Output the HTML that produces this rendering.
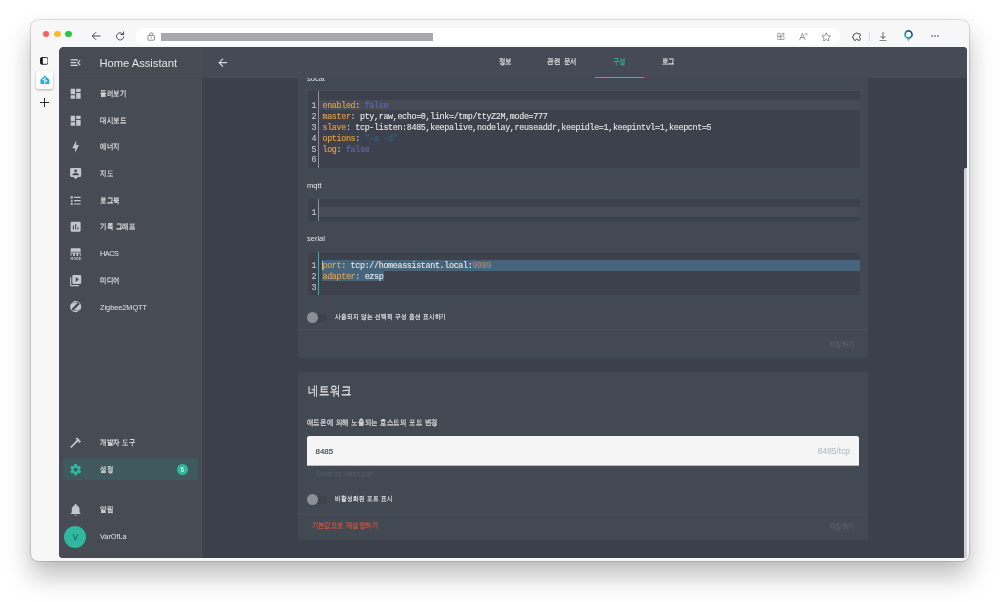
<!DOCTYPE html>
<html lang="ko">
<head>
<meta charset="utf-8">
<title>Zigbee2MQTT - Home Assistant</title>
<style>
*{box-sizing:border-box;margin:0;padding:0}
html,body{width:1000px;height:602px;overflow:hidden;background:#fff;font-family:"Liberation Sans",sans-serif}
.abs{position:absolute}
svg{display:block}
/* ---------- macOS window ---------- */
#win{will-change:transform;position:absolute;left:31px;top:20px;width:938px;height:541px;border-radius:7px;background:#f7f7f8;
 box-shadow:0 0 0 .6px rgba(0,0,0,.22),0 15px 26px rgba(0,0,0,.255),0 2px 8px rgba(0,0,0,.06)}
.tl{position:absolute;top:10.6px;width:6.7px;height:6.7px;border-radius:50%}
#url{position:absolute;left:105px;top:8px;width:704px;height:16.5px;border-radius:9px;background:#fff}
#redact{position:absolute;left:130px;top:12.5px;width:272px;height:8.5px;background:#a9a9a9}
.tb{position:absolute}
/* left vertical tab strip */
#tabsel{position:absolute;left:5px;top:51px;width:17px;height:18px;border-radius:2.5px;background:#fff;box-shadow:0 1px 2.5px rgba(0,0,0,.3)}
/* ---------- page (dark) ---------- */
#page{position:absolute;left:28px;top:27px;width:907.5px;height:511px;border-radius:5px 4px 4px 4px;background:#3c404a;overflow:hidden;color:#e1e1e1}
#side{position:absolute;left:0;top:0;width:143px;height:511px;background:#464b54;border-right:1px solid #484d56}
#sidein{position:absolute;left:1px;top:0;width:142px;height:511px}
#sidehead{position:absolute;left:0;top:0;width:142px;height:31px;border-bottom:1px solid #43474f}
#title{position:absolute;left:39.4px;top:8.5px;font-size:11.2px;line-height:14px;color:#e4e5e7;white-space:nowrap}
.it{position:absolute;left:0;width:142px;height:26.67px}
.it svg{position:absolute;left:8.8px;top:6.7px;width:13.3px;height:13.3px;fill:#c3c6cc}
.it .lb{position:absolute;left:40px;top:7.9px;font-size:7.8px;line-height:12px;color:#e4e5e7;white-space:nowrap}
.ko{display:inline-block;white-space:nowrap;font-size:1.03em;-webkit-text-stroke:.2px}
.ko i{display:inline-flex;justify-content:center;width:var(--cw);font-style:normal;white-space:pre;transform:scaleX(.8)}
#selbg{position:absolute;left:2.5px;top:411.4px;width:135.5px;height:21.4px;border-radius:2px;background:#40595c}
#badge{position:absolute;left:116.7px;top:417px;width:11px;height:11px;border-radius:50%;background:#2fb89f;color:#fff;font-size:6.4px;line-height:11px;text-align:center}
#avatar{position:absolute;left:4.2px;top:478.7px;width:22.2px;height:22.2px;border-radius:50%;background:#2fb89f;color:#17524a;font-size:8.7px;line-height:22.2px;text-align:center}
/* main */
#main{position:absolute;left:143px;top:0;width:764.5px;height:511px}
#mhead{position:absolute;left:0;top:0;width:764.5px;height:31px;background:#464a54;z-index:5}
.tab{position:absolute;top:0;height:31px;font-size:7.8px;line-height:29.2px;text-align:center;color:#e4e5e7;white-space:nowrap}
#uline{position:absolute;left:392.5px;top:29.6px;width:49.5px;height:1.2px;background:#2fb89f}
.card{position:absolute;left:96px;width:570px;background:#434953;border-radius:2.5px}
.lab{position:absolute;left:9px;font-size:7.5px;line-height:10px;color:#e1e2e5;white-space:nowrap}
.ed{position:absolute;left:10.3px;width:551.5px;background:#3c414b;box-shadow:0 -1px 0 #474c56;font-family:"Liberation Mono",monospace;font-size:8.4px;letter-spacing:-.342px;line-height:11px;color:#e8e8e8;overflow:hidden;-webkit-text-stroke:.1px}
.ed .gl{position:absolute;left:10px;top:0;bottom:0;width:1px;background:#8d9097}
.ed .ln{position:absolute;left:0;width:8px;height:11px;text-align:right;color:#c4c7cd}
.ed .tx{position:absolute;left:14.2px;height:11px;white-space:pre}
.ed .act{position:absolute;left:11px;right:0;height:10px;background:#464b55}
.ed .sel{position:absolute;left:13.8px;height:10px;background:#46657d}
.k{color:#e6a545}.a{color:#6565c9}.s{color:#2e6988}.n{color:#b88c68}.p{color:#c9ccd2}
.sw{position:absolute;left:8.6px;width:21px;height:11.2px}
.sw i{position:absolute;left:3px;top:1.6px;width:17px;height:8px;border-radius:4px;background:#3e424b}
.sw b{position:absolute;left:0;top:0;width:11.2px;height:11.2px;border-radius:50%;background:#8b8f97}
.swl{position:absolute;left:37px;font-size:7.2px;line-height:10px;color:#e1e2e5;white-space:nowrap}
.hr{position:absolute;left:0;width:570px;height:1px;background:#474c56}
.save{position:absolute;left:530.6px;font-size:7.7px;line-height:10px;color:#5c616b;white-space:nowrap}
#thumb{position:absolute;left:905px;top:121.4px;width:3px;height:390px;background:#cfd0d4;border-radius:1.5px 0 0 0}
.h2{font-size:12.6px;line-height:16px;color:#e4e5e7;white-space:nowrap}
.desc{font-size:7.8px;line-height:10px;color:#e1e2e5;white-space:nowrap}
.inp{width:552.7px;height:30.6px;background:#f5f5f5;border-radius:2.2px 2.2px 0 0;border-bottom:.5px solid #b9babd}
.help{font-size:6.5px;line-height:9px;color:#595e68;white-space:nowrap}
.reset{font-size:7.6px;line-height:10px;color:#d9513f;white-space:nowrap}
.lat{font-size:7.3px!important;margin-top:.4px}
</style>
</head>
<body>
<div id="win">
  <!-- traffic lights -->
  <div class="tl" style="left:11.7px;background:#fe5f57"></div>
  <div class="tl" style="left:22.9px;background:#febc2e"></div>
  <div class="tl" style="left:34.1px;background:#28c840"></div>
  <!-- back -->
  <svg class="tb" style="left:59.5px;top:10.5px" width="10" height="10" viewBox="0 0 20 20"><path d="M18 10H3M9.5 3L2.5 10l7 7" fill="none" stroke="#2b2b2b" stroke-width="1.7" stroke-linecap="round" stroke-linejoin="round"/></svg>
  <!-- reload -->
  <svg class="tb" style="left:84.3px;top:11px" width="10.4" height="10.4" viewBox="0 0 20 20"><path d="M15.7 6.3A7 7 0 1 0 16.9 11.5" fill="none" stroke="#2b2b2b" stroke-width="1.6" stroke-linecap="round"/><path d="M16.6 1.8V6.9H11.5" fill="none" stroke="#2b2b2b" stroke-width="1.6" stroke-linecap="round" stroke-linejoin="round"/></svg>
  <div id="url"></div>
  <!-- lock -->
  <svg class="tb" style="left:115.5px;top:11.5px" width="8.5" height="9" viewBox="0 0 17 18"><rect x="2" y="7" width="13" height="9.5" rx="1.8" fill="none" stroke="#6b6b6b" stroke-width="1.5"/><path d="M5 7V5a3.5 3.5 0 0 1 7 0v2" fill="none" stroke="#6b6b6b" stroke-width="1.5"/><circle cx="8.5" cy="11.7" r="1.2" fill="#6b6b6b"/></svg>
  <div id="redact"></div>
  <!-- right toolbar icons -->
  <div id="tbicons">
    <!-- collections / app grid -->
    <svg class="tb" style="left:745.5px;top:12px" width="9" height="8.5" viewBox="0 0 18 17"><path d="M1.5 2.5h6v6h-6zM1.5 8.5h6v6.5h-6zM7.5 8.5h6.5v6.5h-6.5z" fill="none" stroke="#8b8b8b" stroke-width="1.4"/><path d="M12.5 1v6M9.5 4h6" stroke="#8b8b8b" stroke-width="1.4"/></svg>
    <!-- read aloud -->
    <svg class="tb" style="left:768px;top:12px" width="10" height="8.5" viewBox="0 0 20 17"><path d="M1.5 15.5L6.8 2.5l5.3 13M3.4 11h6.8" fill="none" stroke="#7d7d7d" stroke-width="1.5" stroke-linejoin="round" stroke-linecap="round"/><path d="M13.5 2.2a3 3 0 0 1 3.3 3.3M13.2 4.8a1 1 0 0 1 1.2 1.2" fill="none" stroke="#7d7d7d" stroke-width="1.2" stroke-linecap="round"/></svg>
    <!-- favourite star -->
    <svg class="tb" style="left:790px;top:11.5px" width="10.5" height="9.5" viewBox="0 0 21 19"><path d="M10.5 1.5l2.7 5.7 6.1.8-4.5 4.2 1.2 6-5.5-3-5.5 3 1.2-6L1.7 8l6.1-.8z" fill="none" stroke="#747474" stroke-width="1.5" stroke-linejoin="round"/></svg>
    <!-- extensions -->
    <svg class="tb" style="left:819.5px;top:11.5px" width="10.5" height="9.5" viewBox="0 0 21 19"><path d="M7 3.5h2.3a2.3 2.3 0 0 1 4.4 0H17a1.5 1.5 0 0 1 1.5 1.5v2.6a2.4 2.4 0 0 0 0 4.6V15a1.5 1.5 0 0 1-1.5 1.5h-3a2.2 2.2 0 0 0-4.4 0H7A1.5 1.5 0 0 1 5.5 15v-2.5a2.4 2.4 0 0 1 0-4.8V5A1.5 1.5 0 0 1 7 3.5z" fill="none" stroke="#2e2e2e" stroke-width="1.7" stroke-linejoin="round"/></svg>
    <div class="tb" style="left:838px;top:12px;width:1px;height:8.5px;background:#dadada"></div>
    <!-- downloads -->
    <svg class="tb" style="left:848px;top:11.5px" width="8" height="9.5" viewBox="0 0 16 19"><path d="M8 1v11.5M3.5 8.5L8 13l4.5-4.5M2 17.5h12" fill="none" stroke="#2e2e2e" stroke-width="1.5" stroke-linecap="round" stroke-linejoin="round"/></svg>
    <!-- pin -->
    <svg class="tb" style="left:873px;top:10px" width="9" height="11.5" viewBox="0 0 18 23"><defs><linearGradient id="pg" x1="1" y1="0" x2="0" y2="1"><stop offset="0" stop-color="#0d5068"/><stop offset=".55" stop-color="#1b7894"/><stop offset="1" stop-color="#58b4cc"/></linearGradient></defs><path d="M5.2 15L9 23l3.8-8z" fill="#9a9a9a"/><circle cx="9" cy="9" r="7.1" fill="#fff" stroke="url(#pg)" stroke-width="3.4"/></svg>
    <!-- more -->
    <svg class="tb" style="left:899.5px;top:15.3px" width="8" height="2" viewBox="0 0 16 4"><circle cx="2" cy="2" r="1.55" fill="#262626"/><circle cx="8" cy="2" r="1.55" fill="#262626"/><circle cx="14" cy="2" r="1.55" fill="#262626"/></svg>
  </div>
  <!-- vertical tabs strip -->
  <svg class="tb" style="left:8.7px;top:36.8px" width="8.5" height="7.8" viewBox="0 0 17 15.6"><rect x="1" y="1" width="15" height="13.6" rx="3" fill="none" stroke="#111" stroke-width="1.7"/><path d="M1 4a3 3 0 0 1 3-3h1.6v13.6H4a3 3 0 0 1-3-3z" fill="#111"/></svg>
  <div id="tabsel"></div>
  <svg class="tb" style="left:8.8px;top:55px" width="9.8" height="9" viewBox="0 0 24 22"><path d="M12 1L1 11.5V20a2 2 0 0 0 2 2h18a2 2 0 0 0 2-2v-8.5z" fill="#2aa9dd"/><path d="M12 21.5V9.5M12 15l-3.8-3.8M12 18.5l3.8-3.8" stroke="#fff" stroke-width="2" fill="none"/><circle cx="12" cy="8.3" r="2" fill="#fff"/><circle cx="7.8" cy="10.8" r="1.8" fill="#fff"/><circle cx="16.2" cy="14.3" r="1.8" fill="#fff"/></svg>
  <div class="tb" style="left:9px;top:82px;width:9px;height:1px;background:#2a2a2a"></div><div class="tb" style="left:13px;top:78px;width:1px;height:9px;background:#2a2a2a"></div>

  <div id="page">
    <div id="side"><div id="sidein">
      <div id="sidehead">
        <svg class="abs" style="left:8.8px;top:9px;fill:#d7d9dd" width="13.3" height="13.3" viewBox="0 0 24 24"><path d="M21,15.61L19.59,17L14.58,12L19.59,7L21,8.39L17.44,12L21,15.61M3,6H16V8H3V6M3,13V11H13V13H3M3,18V16H16V18H3Z"/></svg>
        <div id="title">Home Assistant</div>
      </div>
      <div id="selbg"></div>
      <div class="it" style="top:33.17px"><svg viewBox="0 0 24 24"><path d="M13,3V9H21V3M13,21H21V11H13M3,21H11V15H3M3,13H11V3H3V13Z"/></svg><span class="lb"><span class="ko" style="--cw:6.6px"><i>둘</i><i>러</i><i>보</i><i>기</i></span></span></div>
      <div class="it" style="top:59.83px"><svg viewBox="0 0 24 24"><path d="M13,3V9H21V3M13,21H21V11H13M3,21H11V15H3M3,13H11V3H3V13Z"/></svg><span class="lb"><span class="ko" style="--cw:6.6px"><i>대</i><i>시</i><i>보</i><i>드</i></span></span></div>
      <div class="it" style="top:86.5px"><svg viewBox="0 0 24 24"><path d="M11,15H6L13,1V9H18L11,23V15Z"/></svg><span class="lb"><span class="ko" style="--cw:6.6px"><i>에</i><i>너</i><i>지</i></span></span></div>
      <div class="it" style="top:113.17px"><svg viewBox="0 0 24 24"><path d="M20,2H4A2,2 0 0,0 2,4V16A2,2 0 0,0 4,18H8L12,22L16,18H20A2,2 0 0,0 22,16V4A2,2 0 0,0 20,2M12,4.3C13.5,4.3 14.7,5.5 14.7,7C14.7,8.5 13.5,9.7 12,9.7C10.5,9.7 9.3,8.5 9.3,7C9.3,5.5 10.5,4.3 12,4.3M18,15H6V14.1C6,12.1 10,11 12,11C14,11 18,12.1 18,14.1V15Z"/></svg><span class="lb"><span class="ko" style="--cw:6.6px"><i>지</i><i>도</i></span></span></div>
      <div class="it" style="top:139.83px"><svg viewBox="0 0 24 24"><path d="M5,9.5L7.5,14H2.5L5,9.5M3,4H7V8H3V4M5,20A2,2 0 0,0 7,18A2,2 0 0,0 5,16A2,2 0 0,0 3,18A2,2 0 0,0 5,20M9,5V7H21V5H9M9,19H21V17H9V19M9,13H21V11H9V13Z"/></svg><span class="lb"><span class="ko" style="--cw:6.6px"><i>로</i><i>그</i><i>북</i></span></span></div>
      <div class="it" style="top:166.5px"><svg viewBox="0 0 24 24"><path d="M17,17H15V13H17M13,17H11V7H13M9,17H7V10H9M19,3H5C3.89,3 3,3.89 3,5V19A2,2 0 0,0 5,21H19A2,2 0 0,0 21,19V5C21,3.89 20.1,3 19,3Z"/></svg><span class="lb"><span class="ko" style="--cw:6.6px"><i>기</i><i>록</i><i class="sp" style="width:2.5px"> </i><i>그</i><i>래</i><i>프</i></span></span></div>
      <div class="it" style="top:193.17px"><svg viewBox="0 0 24 24" style="transform:translateY(.4px) scaleY(1.16)"><path d="M3.5,3H20.5L21.5,8.5H2.5L3.5,3M3,9.7H21V15H19.6V11.2H16.6V15H13.5V11.2H10.5V15H7.4V11.2H4.4V15H3V9.7M3,16.5H4.3V18.2H6V16.5H7.3V21H6V19.4H4.3V21H3V16.5M8.3,21L9.8,16.5H11L12.5,21H11.3L10.4,18L9.5,21H8.3M13.3,16.5H16.6V17.7H14.6V19.8H16.6V21H13.3V16.5M17.6,16.5H21V17.7H18.9V18.2H21V21H17.6V19.8H19.7V19.4H17.6V16.5Z"/></svg><span class="lb lat" style="letter-spacing:-.45px">HACS</span></div>
      <div class="it" style="top:219.83px"><svg viewBox="0 0 24 24"><path d="M4,6H2V20A2,2 0 0,0 4,22H18V20H4V6M20,2H8A2,2 0 0,0 6,4V16A2,2 0 0,0 8,18H20A2,2 0 0,0 22,16V4A2,2 0 0,0 20,2M12,14.5V5.5L18,10L12,14.5Z"/></svg><span class="lb"><span class="ko" style="--cw:6.6px"><i>미</i><i>디</i><i>어</i></span></span></div>
      <div class="it" style="top:246.5px"><svg viewBox="0 0 24 24"><path d="M4.06,6.15C3.97,6.17 3.88,6.22 3.8,6.28C2.66,7.9 2,9.87 2,12A10,10 0 0,0 12,22C15,22 17.68,20.68 19.5,18.6L17,18.85C14.25,19.15 11.45,19.19 8.66,18.96C7.95,18.94 7.24,18.76 6.59,18.45C5.73,18.06 5.15,17.23 5.07,16.29C5.06,16.13 5.12,16 5.23,15.87L7.42,13.6L15.03,5.7V5.6H10.84C8.57,5.64 6.31,5.82 4.06,6.15M20.17,17.5C20.26,17.47 20.35,17.44 20.43,17.39C21.42,15.83 22,14 22,12A10,10 0 0,0 12,2C9.22,2 6.7,3.13 4.89,4.97H5.17C8.28,4.57 11.43,4.47 14.56,4.65C15.5,4.64 16.45,4.82 17.33,5.17C18.25,5.53 18.89,6.38 19,7.37C19,7.53 18.93,7.7 18.82,7.82L9.71,17.19L9,17.95V18.06H13.14C15.5,18 17.84,17.81 20.17,17.5Z"/></svg><span class="lb lat">Zigbee2MQTT</span></div>
      <div class="it" style="top:382.5px"><svg viewBox="0 0 24 24"><path d="M2,19.63L13.43,8.2L12.72,7.5L14.14,6.07L12,3.89C13.2,2.7 15.09,2.7 16.27,3.89L19.87,7.5L18.45,8.91H21.29L22,9.62L18.45,13.21L17.74,12.5V9.62L16.27,11.04L15.56,10.33L4.13,21.76L2,19.63Z"/></svg><span class="lb"><span class="ko" style="--cw:6.6px"><i>개</i><i>발</i><i>자</i><i class="sp" style="width:2.5px"> </i><i>도</i><i>구</i></span></span></div>
      <div class="it" style="top:409.17px"><svg viewBox="0 0 24 24" style="fill:#2fb89f"><path d="M12,15.5A3.5,3.5 0 0,1 8.5,12A3.5,3.5 0 0,1 12,8.5A3.5,3.5 0 0,1 15.5,12A3.5,3.5 0 0,1 12,15.5M19.43,12.97C19.47,12.65 19.5,12.33 19.5,12C19.5,11.67 19.47,11.34 19.43,11L21.54,9.37C21.73,9.22 21.78,8.95 21.66,8.73L19.66,5.27C19.54,5.05 19.27,4.96 19.05,5.05L16.56,6.05C16.04,5.66 15.5,5.32 14.87,5.07L14.5,2.42C14.46,2.18 14.25,2 14,2H10C9.75,2 9.54,2.18 9.5,2.42L9.13,5.07C8.5,5.32 7.96,5.66 7.44,6.05L4.95,5.05C4.73,4.96 4.46,5.05 4.34,5.27L2.34,8.73C2.21,8.95 2.27,9.22 2.46,9.37L4.57,11C4.53,11.34 4.5,11.67 4.5,12C4.5,12.33 4.53,12.65 4.57,12.97L2.46,14.63C2.27,14.78 2.21,15.05 2.34,15.27L4.34,18.73C4.46,18.95 4.73,19.03 4.95,18.95L7.44,17.94C7.96,18.34 8.5,18.68 9.13,18.93L9.5,21.58C9.54,21.82 9.75,22 10,22H14C14.25,22 14.46,21.82 14.5,21.58L14.87,18.93C15.5,18.67 16.04,18.34 16.56,17.94L19.05,18.95C19.27,19.03 19.54,18.95 19.66,18.73L21.66,15.27C21.78,15.05 21.73,14.78 21.54,14.63L19.43,12.97Z"/></svg><span class="lb"><span class="ko" style="--cw:6.6px"><i>설</i><i>정</i></span></span></div>
      <div class="it" style="top:449.07px"><svg viewBox="0 0 24 24"><path d="M21,19V20H3V19L5,17V11C5,7.9 7.03,5.17 10,4.29C10,4.19 10,4.1 10,4A2,2 0 0,1 12,2A2,2 0 0,1 14,4C14,4.1 14,4.19 14,4.29C16.97,5.17 19,7.9 19,11V17L21,19M14,21A2,2 0 0,1 12,23A2,2 0 0,1 10,21"/></svg><span class="lb"><span class="ko" style="--cw:6.6px"><i>알</i><i>림</i></span></span></div>
      <div id="badge">6</div>
      <div id="avatar">V</div>
      <div class="it" style="top:475.67px"><span class="lb lat">VarOfLa</span></div>
    </div></div>
    <div id="main">
      <div id="mhead">
        <svg class="abs" style="left:13.8px;top:8.9px;fill:#d7d9dd" width="13.3" height="13.3" viewBox="0 0 24 24"><path d="M20,11V13H8L13.5,18.5L12.08,19.92L4.16,12L12.08,4.08L13.5,5.5L8,11H20Z"/></svg>
        <div class="tab" style="left:279px;width:48.6px"><span class="ko" style="--cw:6.6px"><i>정</i><i>보</i></span></div>
        <div class="tab" style="left:327.6px;width:64.8px"><span class="ko" style="--cw:6.6px"><i>관</i><i>련</i><i class="sp" style="width:3.3px"> </i><i>문</i><i>서</i></span></div>
        <div class="tab" style="left:392.4px;width:49.5px;color:#2fb89f"><span class="ko" style="--cw:6.6px"><i>구</i><i>성</i></span></div>
        <div class="tab" style="left:441.9px;width:49.2px"><span class="ko" style="--cw:6.6px"><i>로</i><i>그</i></span></div>
        <div id="uline"></div>
      </div>
      <div class="card" style="top:11px;height:300px">
        <div class="lab" style="top:15.5px">socat</div>
        <div class="ed" style="top:32.6px;height:77.4px">
          <div class="act" style="top:9.4px"></div>
          <div class="gl"></div>
          <div class="ln" style="top:10.4px">1</div>
          <div class="tx" style="top:10.4px"><span class="k">enabled</span><span class="p">:</span> <span class="a">false</span></div>
          <div class="ln" style="top:21.3px">2</div>
          <div class="tx" style="top:21.3px"><span class="k">master</span><span class="p">:</span> pty,raw,echo=0,link=/tmp/ttyZ2M,mode=777</div>
          <div class="ln" style="top:32.2px">3</div>
          <div class="tx" style="top:32.2px"><span class="k">slave</span><span class="p">:</span> tcp-listen:8485,keepalive,nodelay,reuseaddr,keepidle=1,keepintvl=1,keepcnt=5</div>
          <div class="ln" style="top:43.1px">4</div>
          <div class="tx" style="top:43.1px"><span class="k">options</span><span class="p">:</span> <span class="s">"-a -d"</span></div>
          <div class="ln" style="top:54px">5</div>
          <div class="tx" style="top:54px"><span class="k">log</span><span class="p">:</span> <span class="a">false</span></div>
          <div class="ln" style="top:64.9px">6</div>
          </div>
        <div class="lab" style="top:123px">mqtt</div>
        <div class="ed" style="top:140.6px;height:22px">
          <div class="act" style="top:8.4px"></div>
          <div class="gl"></div>
          <div class="ln" style="top:9.4px">1</div>
          </div>
        <div class="lab" style="top:176px">serial</div>
        <div class="ed" style="top:193.6px;height:43.2px">
          <div class="sel" style="top:8.9px;right:0;height:10.6px"></div><div class="sel" style="top:19.5px;width:62px;height:9.5px"></div><div class="abs" style="left:13.8px;top:9.4px;width:1px;height:9.4px;background:#e3b070"></div>
          <div class="gl" style="background:#2fb89f"></div>
          <div class="ln" style="top:9.8px">1</div>
          <div class="tx" style="top:9.8px"><span class="k">port</span><span class="p">:</span> tcp://homeassistant.local:<span class="n">9999</span></div>
          <div class="ln" style="top:20.7px">2</div>
          <div class="tx" style="top:20.7px"><span class="k">adapter</span><span class="p">:</span> ezsp</div>
          <div class="ln" style="top:31.6px">3</div>
          </div>
        <div class="sw" style="top:254px"><i></i><b></b></div>
        <div class="swl" style="top:254.2px"><span class="ko" style="--cw:5.95px"><i>사</i><i>용</i><i>되</i><i>지</i><i class="sp" style="width:2.1px"> </i><i>않</i><i>는</i><i class="sp" style="width:2.1px"> </i><i>선</i><i>택</i><i>적</i><i class="sp" style="width:2.1px"> </i><i>구</i><i>성</i><i class="sp" style="width:2.1px"> </i><i>옵</i><i>션</i><i class="sp" style="width:2.1px"> </i><i>표</i><i>시</i><i>하</i><i>기</i></span></div>
        <div class="hr" style="top:271px"></div>
        <div class="save" style="top:281.7px"><span class="ko" style="--cw:6.5px"><i>저</i><i>장</i><i>하</i><i>기</i></span></div>
      </div>
      <div class="card" style="top:325px;height:168px">
        <div class="abs h2" style="left:9.6px;top:11.2px"><span class="ko" style="--cw:11.1px"><i>네</i><i>트</i><i>워</i><i>크</i></span></div>
        <div class="abs desc" style="left:8.8px;top:45.9px"><span class="ko" style="--cw:6.6px"><i>애</i><i>드</i><i>온</i><i>에</i><i class="sp" style="width:2.5px"> </i><i>의</i><i>해</i><i class="sp" style="width:2.5px"> </i><i>노</i><i>출</i><i>되</i><i>는</i><i class="sp" style="width:2.5px"> </i><i>호</i><i>스</i><i>트</i><i>의</i><i class="sp" style="width:2.5px"> </i><i>포</i><i>트</i><i class="sp" style="width:2.5px"> </i><i>변</i><i>경</i></span></div>
        <div class="abs inp" style="left:8.8px;top:63.5px">
          <span class="abs" style="left:8.8px;top:10px;font-size:7.9px;line-height:11px;color:#3c4046;-webkit-text-stroke:.15px">8485</span>
          <span class="abs" style="right:9.5px;top:10px;font-size:8.4px;line-height:11px;color:#b1b3b7">8485/tcp</span>
        </div>
        <div class="abs help" style="left:17.6px;top:97.1px">Socat tcp-listen port</div>
        <div class="sw" style="top:122px"><i></i><b></b></div>
        <div class="swl" style="top:122.3px"><span class="ko" style="--cw:5.95px"><i>비</i><i>활</i><i>성</i><i>화</i><i>된</i><i class="sp" style="width:2.1px"> </i><i>포</i><i>트</i><i class="sp" style="width:2.1px"> </i><i>표</i><i>시</i></span></div>
        <div class="hr" style="top:141.5px"></div>
        <div class="abs reset" style="left:13.6px;top:149.3px"><span class="ko" style="--cw:6.4px"><i>기</i><i>본</i><i>값</i><i>으</i><i>로</i><i class="sp" style="width:2.4px"> </i><i>재</i><i>설</i><i>정</i><i>하</i><i>기</i></span></div>
        <div class="save" style="top:150.4px"><span class="ko" style="--cw:6.5px"><i>저</i><i>장</i><i>하</i><i>기</i></span></div>
      </div>
    </div>
    <div id="thumb"></div>
  </div>
</div>
</body>
</html>
